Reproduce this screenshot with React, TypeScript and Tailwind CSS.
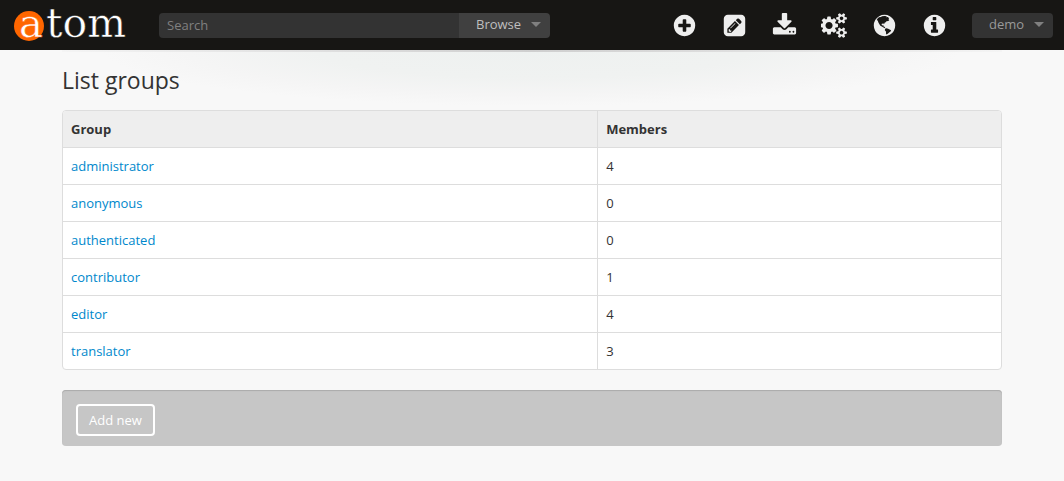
import React from "react";

type IconProps = { children: React.ReactNode; width?: number };

function Glyph({ children, width = 1792 }: IconProps) {
  return (
    <svg
      viewBox={`0 0 ${width} 1792`}
      className="h-[25px] w-auto shrink-0"
      fill="currentColor"
      fillRule="evenodd"
      aria-hidden="true"
    >
      {children}
    </svg>
  );
}

const disc =
  "M1664 896q0 209-103 385.5t-279.5 279.5-385.5 103-385.5-103-279.5-279.5-103-385.5 103-385.5 279.5-279.5 385.5-103 385.5 103 279.5 279.5 103 385.5z";

const smallCog =
  "v140q0 16-149 31-12 27-30 52 51 113 51 138 0 4-4 7-122 71-124 71-8 0-46-47t-52-68q-20 2-30 2t-30-2q-14 21-52 68t-46 47q-2 0-124-71-4-3-4-7 0-25 51-138-18-25-30-52-149-15-149-31v-140q0-16 149-31 13-29 30-52-51-113-51-138 0-4 4-7 4-2 35-20t59-34 30-16q8 0 46 46.5t52 67.5q20-2 30-2t30 2q51-71 92-112l6-2q4 0 124 70 4 3 4 7 0 25-51 138 17 23 30 52 149 15 149 31z";

const actions = [
  {
    label: "Add",
    width: 1792,
    art: (
      <path
        d={`M1344 960v-128q0-26-19-45t-45-19h-256v-256q0-26-19-45t-45-19h-128q-26 0-45 19t-19 45v256h-256q-26 0-45 19t-19 45v128q0 26 19 45t45 19h256v256q0 26 19 45t45 19h128q26 0 45-19t19-45v-256h256q26 0 45-19t19-45z${disc}`}
      />
    ),
  },
  {
    label: "Manage",
    width: 1792,
    art: (
      <path d="M416 128h960q119 0 203.500 84.500t84.500 203.500v960q0 119-84.500 203.500t-203.500 84.500h-960q-119 0-203.500-84.500t-84.500-203.500v-960q0-119 84.500-203.500t203.500-84.500zM384 1120v288h288l544-544-288-288zM992 512l288 288 92-92q28-28 28-68t-28-68l-152-152q-28-28-68-28t-68 28zM480 1160h96v96h96v56l-50 50-142-40zM600 1060l320-320q16-16 32 0t0 32l-320 320q-16 16-32 0t0-32z" />
    ),
  },
  {
    label: "Import",
    width: 1792,
    art: (
      <path d="M1344 1344q0-26-19-45t-45-19-45 19-19 45 19 45 45 19 45-19 19-45zm256 0q0-26-19-45t-45-19-45 19-19 45 19 45 45 19 45-19 19-45zm128-224v320q0 40-28 68t-68 28h-1472q-40 0-68-28t-28-68v-320q0-40 28-68t68-28h465l135 136q58 56 136 56t136-56l136-136h464q40 0 68 28t28 68zm-325-569q17 41-14 70l-448 448q-18 19-45 19t-45-19l-448-448q-31-29-14-70 17-39 59-39h256v-448q0-26 19-45t45-19h256q26 0 45 19t19 45v448h256q42 0 59 39z" />
    ),
  },
  {
    label: "Admin",
    width: 1920,
    art: (
      <path
        d={`M832 896q0-106-75-181t-181-75-181 75-75 181 75 181 181 75 181-75 75-181zm768 512q0-52-38-90t-90-38-90 38-38 90q0 53 37.500 90.500t90.500 37.500 90.500-37.500 37.500-90.500zm0-1024q0-52-38-90t-90-38-90 38-38 90q0 53 37.500 90.500t90.500 37.500 90.500-37.500 37.500-90.500zm-384 421v185q0 10-7 19.500t-16 10.500l-155 24q-11 35-32 76 34 48 90 115 7 11 7 20 0 12-7 19-23 30-82.500 89.500t-78.500 59.500q-11 0-21-7l-115-90q-37 19-77 31-11 108-23 155-7 24-30 24h-186q-11 0-20-7.500t-10-17.500l-23-153q-34-10-75-31l-118 89q-7 7-20 7-11 0-21-8-144-133-144-160 0-9 7-19 10-14 41-53t47-61q-23-44-35-82l-152-24q-10-1-17-9.500t-7-19.500v-185q0-10 7-19.500t16-10.500l155-24q11-35 32-76-34-48-90-115-7-11-7-20 0-12 7-20 22-30 82-89t79-59q11 0 21 7l115 90q34-18 77-32 11-108 23-154 7-24 30-24h186q11 0 20 7.500t10 17.500l23 153q34 10 75 31l118-89q8-7 20-7 11 0 21 8 144 133 144 160 0 8-7 19-12 16-42 54t-45 60q23 48 34 82l152 23q10 2 17 10.500t7 19.500zM1856 1338${smallCog}M1856 314${smallCog}`}
      />
    ),
  },
  {
    label: "Language",
    width: 1792,
    art: (
      <>
        <path d={disc} />
        <path
          className="fill-[#171614]"
          d="M400 400L500 310 640 290 720 230 900 215 1060 240 1020 300 1140 290 1220 380 1180 440 1240 520 1160 580 1040 600 960 680 900 700 880 790 810 750 700 770 690 860 760 890 820 850 810 950 900 990 960 1090 880 1080 740 990 600 910 520 790 450 660 420 560 340 500zM940 1120L1030 1090 1160 1120 1260 1190 1370 1240 1330 1330 1230 1400 1130 1480 1030 1540 1000 1460 1010 1350 920 1240z"
        />
      </>
    ),
  },
  {
    label: "Info",
    width: 1792,
    art: (
      <path
        d={`M1152 1376v-160q0-14-9-23t-23-9h-96v-512q0-14-9-23t-23-9h-320q-14 0-23 9t-9 23v160q0 14 9 23t23 9h96v320h-96q-14 0-23 9t-9 23v160q0 14 9 23t23 9h448q14 0 23-9t9-23zm-128-896v-160q0-14-9-23t-23-9h-192q-14 0-23 9t-9 23v160q0 14 9 23t23 9h192q14 0 23-9t9-23z${disc}`}
      />
    ),
  },
];

const groups = [
  { name: "administrator", members: 4 },
  { name: "anonymous", members: 0 },
  { name: "authenticated", members: 0 },
  { name: "contributor", members: 1 },
  { name: "editor", members: 4 },
  { name: "translator", members: 3 },
];

function Caret() {
  return (
    <svg viewBox="0 0 10 5" className="h-[5px] w-[10px] fill-[#808080]" aria-hidden="true">
      <path d="M0 0h10L5 5z" />
    </svg>
  );
}

function Logo() {
  return (
    <svg
      viewBox="0 0 120 50"
      className="h-[50px] w-[120px] fill-white stroke-[#171614] font-['DejaVu_Serif',serif] text-[41px]"
      strokeWidth="0.5"
      aria-hidden="true"
    >
      <circle cx="15" cy="26" r="15" className="fill-[#ff6600] stroke-none" />
      <text x="5" y="37" className="stroke-[#ff6600] text-[40px]">
        a
      </text>
      <text x="32" y="37">
        tom
      </text>
    </svg>
  );
}

function Header() {
  return (
    <header className="relative z-10 flex h-[50px] items-center bg-[#171614] pr-[11px] pl-[14px]">
      <a href="#home" aria-label="atom" className="w-[145px] shrink-0">
        <Logo />
      </a>
      <form className="flex h-[25px] w-[391px]" onSubmit={(e) => e.preventDefault()}>
        <input
          type="text"
          aria-label="Search"
          placeholder="Search"
          className="min-w-0 flex-1 rounded-l bg-[#333333] px-2 text-[13px] text-[#cccccc] outline-none placeholder:text-[#808080]"
        />
        <button
          type="button"
          className="flex w-[91px] items-center gap-[10px] rounded-r bg-[#404040] pb-[2px] pl-[17px] text-[13px] text-[#bfbfbf]"
        >
          Browse
          <Caret />
        </button>
      </form>
      <nav className="ml-auto flex items-center">
        {actions.map((action) => (
          <button
            key={action.label}
            type="button"
            aria-label={action.label}
            className="flex h-[50px] w-[50px] items-center justify-center text-[#eeeeee]"
          >
            <Glyph width={action.width}>{action.art}</Glyph>
          </button>
        ))}
      </nav>
      <button
        type="button"
        className="ml-[13px] flex h-[25px] w-[81px] items-center gap-[10px] rounded bg-[#333333] pb-[2px] pl-[17px] text-[13px] text-[#999999]"
      >
        demo
        <Caret />
      </button>
    </header>
  );
}

export default function App() {
  return (
    <div className="min-h-screen bg-[#f8f8f8] font-['Open_Sans',sans-serif] text-[13px] leading-5 text-[#333333]">
      <Header />
      <main className="mx-auto max-w-[940px] bg-[radial-gradient(ellipse_430px_56px_at_50%_0,#eef1f0,#f0f2f1_50%,#f5f5f5_80%,#f8f8f8)] bg-no-repeat">
        <div className="h-[2px] bg-linear-to-r from-[#f4f4f4] via-[#cfcfcf] to-[#f4f4f4]" />
        <h1 className="pt-2 pb-[10px] text-[23px] leading-10">List groups</h1>
        <div className="overflow-hidden rounded border border-[#dddddd] bg-white">
          <table className="w-full table-fixed border-collapse text-left">
            <thead className="bg-[#eeeeee]">
              <tr>
                <th className="w-[57%] p-2 font-bold">Group</th>
                <th className="border-l border-[#dddddd] p-2 font-bold">Members</th>
              </tr>
            </thead>
            <tbody>
              {groups.map((group) => (
                <tr key={group.name} className="border-t border-[#dddddd]">
                  <td className="p-2">
                    <a href={`#${group.name}`} className="text-[#0088cc]">
                      {group.name}
                    </a>
                  </td>
                  <td className="border-l border-[#dddddd] p-2">{group.members}</td>
                </tr>
              ))}
            </tbody>
          </table>
        </div>
        <section className="mt-5 rounded bg-[#c6c6c6] px-[14px] pt-[14px] pb-[10px] shadow-[inset_0_1px_1px_#aaaaaa]">
          <button
            type="button"
            className="block h-8 rounded border-2 border-white px-[11px] text-[13px] leading-5 text-white"
          >
            Add new
          </button>
        </section>
      </main>
    </div>
  );
}
